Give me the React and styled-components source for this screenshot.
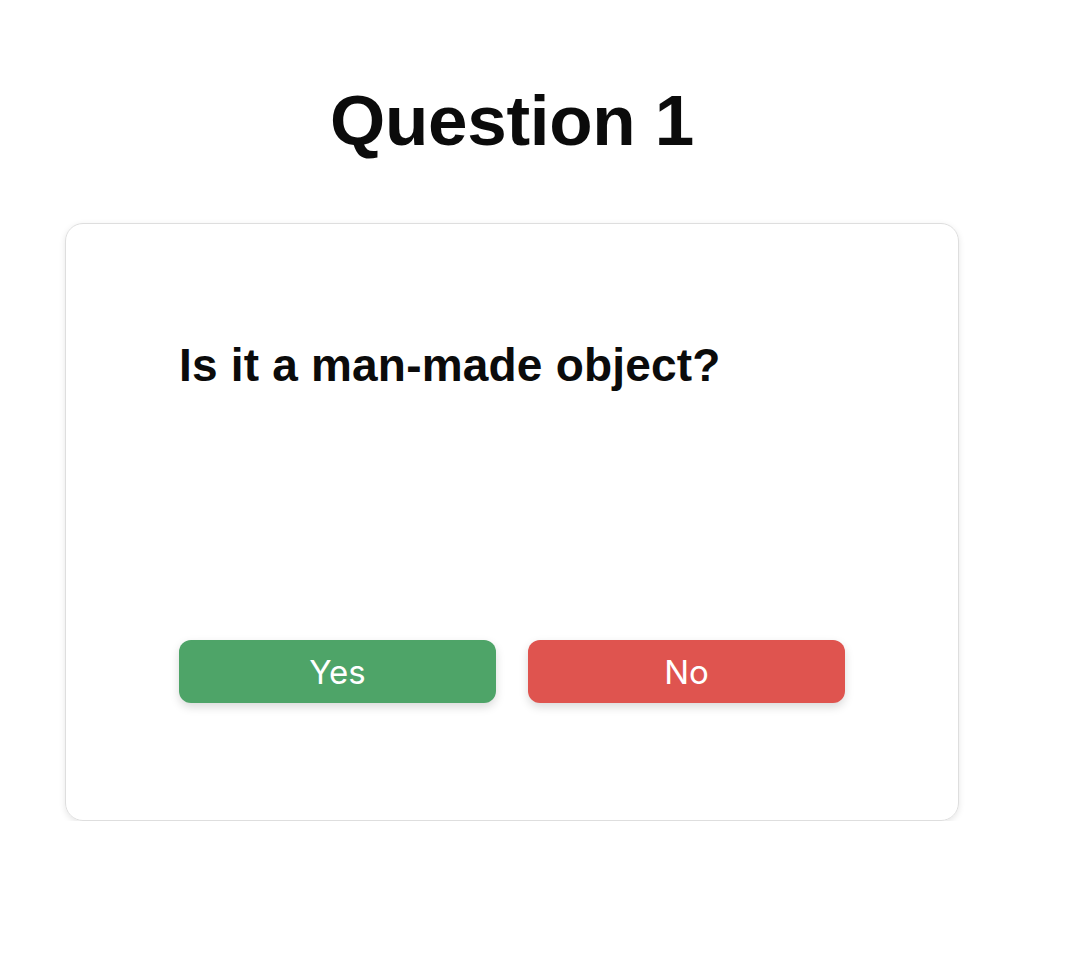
import styled, { createGlobalStyle } from "styled-components";

const GlobalStyle = createGlobalStyle`
  body {
    margin: 0;
    background: #ffffff;
    font-family: "Liberation Sans", Arial, sans-serif;
    color: #0b0b0b;
  }
`;

function App() {
  const answer = (value) => {
    console.log(value);
  };
  return (
    <Page>
      <GlobalStyle />
      <Title>Question 1</Title>
      <Card>
        <QuestionText>Is it a man-made object?</QuestionText>
        <Actions>
          <AnswerButton $color="#4ea468" onClick={() => answer(true)}>
            Yes
          </AnswerButton>
          <AnswerButton $color="#df544f" onClick={() => answer(false)}>
            No
          </AnswerButton>
        </Actions>
      </Card>
    </Page>
  );
}

export default App;

const Page = styled.div`
  width: 894px;
  margin-left: 65px;
  padding-top: 85px;
  display: flex;
  flex-direction: column;
  align-items: center;
`;

const Title = styled.h1`
  margin: 0 0 67px;
  font-size: 71px;
  line-height: 1;
  font-weight: 700;
  letter-spacing: -0.3px;
`;

const Card = styled.div`
  box-sizing: border-box;
  width: 100%;
  padding: 118px 113px 117px;
  border: 1px solid #dedede;
  border-radius: 18px;
  box-shadow: 0 2px 6px rgba(0, 0, 0, 0.1);
  display: flex;
  flex-direction: column;
  gap: 252px;
`;

const QuestionText = styled.h2`
  margin: 0;
  font-size: 46px;
  line-height: 1;
  font-weight: 700;
  letter-spacing: 0.2px;
`;

const Actions = styled.div`
  display: flex;
  gap: 32px;
`;

const AnswerButton = styled.button`
  width: 318px;
  height: 63px;
  border: none;
  border-radius: 12px;
  background: ${(props) => props.$color};
  color: #ffffff;
  font-family: "Inter", sans-serif;
  font-size: 33px;
  font-weight: 400;
  box-shadow: 0 4px 10px rgba(0, 0, 0, 0.15);
  cursor: pointer;
  display: flex;
  align-items: center;
  justify-content: center;
`;
